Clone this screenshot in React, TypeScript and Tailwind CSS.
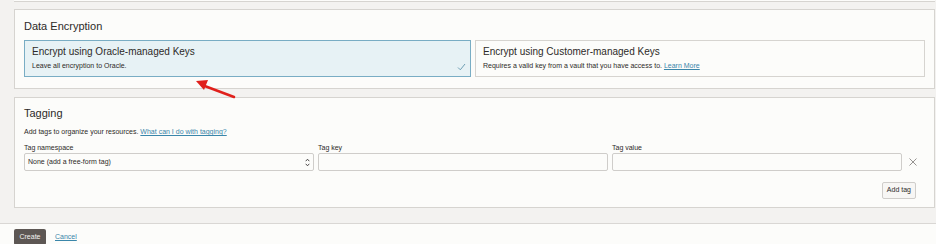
import React from 'react'

const font = { fontFamily: '"Liberation Sans", Arial, sans-serif' }

const App = () => {
  return (
    <div className="relative w-[936px] h-[244px] overflow-hidden bg-[#fcfcfa] text-[#2d2a28]" style={font}>
      <div className="bg-[#f3f2f0] pl-[14px] pr-[1px] h-[224px] border-b border-[#d9d7d4]">
        <div className="h-[2px] bg-[#fcfcfa] border-b border-[#d6d4d0]" />

        {/* Data Encryption */}
        <div className="mt-[7px] h-[80px] bg-[#fcfcfa] border border-[#d6d4d0] px-[9px] pt-[8px]">
          <div className="text-[11px] leading-[16px]">Data Encryption</div>
          <div className="mt-[6px] flex gap-[4px]">
            <div className="relative w-[448px] h-[37px] bg-[#e7f2f5] border border-[#79adc4] px-[7px] pt-[3px]">
              <div className="text-[10px] leading-[15px]">Encrypt using Oracle-managed Keys</div>
              <div className="mt-[2px] text-[7px] leading-[10px]">Leave all encryption to Oracle.</div>
              <svg className="absolute right-[4px] bottom-[5px]" width="9" height="8" viewBox="0 0 9 8">
                <path d="M1 4.5 L3.3 6.8 L8 1" fill="none" stroke="#6f9fb4" strokeWidth="1" />
              </svg>
            </div>
            <div className="w-[451px] h-[37px] bg-[#fcfcfa] border border-[#d6d4d0] px-[7px] pt-[3px]">
              <div className="text-[10px] leading-[15px]">Encrypt using Customer-managed Keys</div>
              <div className="mt-[2px] text-[7px] leading-[10px]">
                Requires a valid key from a vault that you have access to.{' '}
                <span className="text-[#3a86aa] underline">Learn More</span>
              </div>
            </div>
          </div>
        </div>

        {/* Tagging */}
        <div className="mt-[8px] h-[111px] bg-[#fcfcfa] border border-[#d6d4d0] px-[9px] pt-[7px]">
          <div className="text-[11px] leading-[16px]">Tagging</div>
          <div className="mt-[6px] text-[7px] leading-[10px]">
            Add tags to organize your resources.{' '}
            <span className="text-[#3a86aa] underline">What can I do with tagging?</span>
          </div>
          <div className="mt-[6px] flex items-end gap-[4px]">
            <div className="w-[290px]">
              <div className="text-[7px] leading-[10px]">Tag namespace</div>
              <div className="h-[18px] border border-[#cfcdca] bg-[#fcfcfa] rounded-[2px] flex items-center justify-between pl-[3px] pr-[3px]">
                <span className="text-[7px]">None (add a free-form tag)</span>
                <svg width="5" height="9" viewBox="0 0 5 9">
                  <path d="M0.7 3.2 L2.5 1.2 L4.3 3.2 M0.7 5.8 L2.5 7.8 L4.3 5.8" fill="none" stroke="#3a3735" strokeWidth="0.9" />
                </svg>
              </div>
            </div>
            <div className="w-[290px]">
              <div className="text-[7px] leading-[10px]">Tag key</div>
              <div className="h-[18px] border border-[#cfcdca] bg-[#fcfcfa] rounded-[2px]" />
            </div>
            <div className="w-[290px]">
              <div className="text-[7px] leading-[10px]">Tag value</div>
              <div className="h-[18px] border border-[#cfcdca] bg-[#fcfcfa] rounded-[2px]" />
            </div>
            <div className="h-[18px] flex items-center pl-[3px]">
              <svg width="8" height="8" viewBox="0 0 8 8">
                <path d="M0.5 0.5 L7.5 7.5 M7.5 0.5 L0.5 7.5" stroke="#8a8785" strokeWidth="0.9" />
              </svg>
            </div>
          </div>
          <div className="mt-[11px] flex justify-end pr-[9px]">
            <div className="h-[17px] px-[4px] border border-[#cfcdca] rounded-[2px] bg-[#f7f6f4] text-[7px] flex items-center">Add tag</div>
          </div>
        </div>
      </div>

      {/* footer */}
      <div className="flex items-center gap-[9px] pl-[14px] pt-[5px]">
        <div className="h-[16px] w-[32px] bg-[#5d5754] rounded-[2px] text-[#f5f4f2] text-[7px] flex items-center justify-center">Create</div>
        <span className="text-[7px] text-[#3a86aa] underline">Cancel</span>
      </div>

      {/* annotation arrow */}
      <svg className="absolute left-[190px] top-[76px]" width="52" height="26" viewBox="0 0 52 26">
        <line x1="44" y1="21" x2="12" y2="9" stroke="#e0201b" strokeWidth="2.5" strokeLinecap="round" />
        <polygon points="6,5 18,4 14,14" fill="#e0201b" />
      </svg>
    </div>
  )
}

export default App
